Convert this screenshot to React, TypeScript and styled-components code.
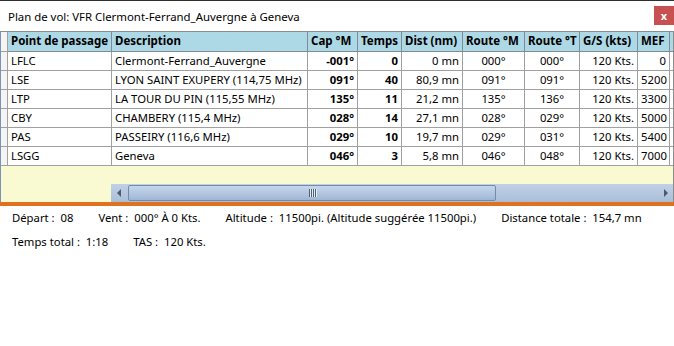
import styled, { createGlobalStyle } from "styled-components";

const GlobalStyle = createGlobalStyle`
  body {
    margin: 0;
    background: #ffffff;
    font-family: "Noto Sans", "Open Sans", sans-serif;
    font-size: 11.3px;
    color: #000000;
  }
`;

const COLS = "7px 104px 196px 50px 44px 61px 62px 55px 58px 32px 1fr";

type Align = "left" | "right" | "center";

const columns: { title: string; align: Align; bold?: boolean }[] = [
  { title: "Point de passage", align: "left" },
  { title: "Description", align: "left" },
  { title: "Cap °M", align: "right", bold: true },
  { title: "Temps", align: "right", bold: true },
  { title: "Dist (nm)", align: "right" },
  { title: "Route °M", align: "center" },
  { title: "Route °T", align: "center" },
  { title: "G/S (kts)", align: "right" },
  { title: "MEF", align: "right" },
];

const rows = [
  ["LFLC", "Clermont-Ferrand_Auvergne", "-001°", "0", "0 mn", "000°", "000°", "120 Kts.", "0"],
  ["LSE", "LYON SAINT EXUPERY (114,75 MHz)", "091°", "40", "80,9 mn", "091°", "091°", "120 Kts.", "5200"],
  ["LTP", "LA TOUR DU PIN (115,55 MHz)", "135°", "11", "21,2 mn", "135°", "136°", "120 Kts.", "3300"],
  ["CBY", "CHAMBERY (115,4 MHz)", "028°", "14", "27,1 mn", "028°", "029°", "120 Kts.", "5000"],
  ["PAS", "PASSEIRY (116,6 MHz)", "029°", "10", "19,7 mn", "029°", "031°", "120 Kts.", "5400"],
  ["LSGG", "Geneva", "046°", "3", "5,8 mn", "046°", "048°", "120 Kts.", "7000"],
];

const Window = styled.div`
  width: 674px;
  height: 346px;
  border-top: 1px solid #2e2e2e;
  box-sizing: border-box;
  display: flex;
  flex-direction: column;
`;

const TitleBar = styled.div`
  height: 30px;
  display: flex;
  align-items: center;
  justify-content: space-between;
  padding-left: 8px;
`;

const Title = styled.span`
  font-size: 11.4px;
`;

const CloseButton = styled.div`
  width: 20px;
  height: 19px;
  margin-top: -1px;
  background: #c75050;
  color: #ffffff;
  font-size: 11px;
  font-weight: bold;
  display: flex;
  align-items: center;
  justify-content: center;
  line-height: 1;
`;

const GridPanel = styled.div`
  height: 171px;
  box-sizing: border-box;
  border-top: 1px solid #8c8c8c;
  border-left: 1px solid #7b93b3;
  border-right: 1px solid #8c8c8c;
  background: #fafad2;
  display: flex;
  flex-direction: column;
`;

const Row = styled.div<{ $head?: boolean }>`
  display: grid;
  grid-template-columns: ${COLS};
  height: ${(p) => (p.$head ? 20 : 19)}px;
  background: ${(p) => (p.$head ? "#add8e6" : "#ffffff")};
`;

const Cell = styled.div<{ $align?: Align; $bold?: boolean; $head?: boolean }>`
  box-sizing: border-box;
  border-right: 1px solid ${(p) => (p.$head ? "#7f8c93" : "#a0a0a0")};
  border-bottom: 1px solid ${(p) => (p.$head ? "#7f8c93" : "#a0a0a0")};
  padding: 0 3px;
  text-align: ${(p) => p.$align ?? "left"};
  font-weight: ${(p) => (p.$bold ? "bold" : "normal")};
  font-size: ${(p) => (p.$head ? 11.5 : 11.3)}px;
  line-height: 18px;
  white-space: nowrap;
  overflow: hidden;
`;

const RowHeader = styled.div`
  box-sizing: border-box;
  background: #f4f4f4;
  border-right: 1px solid #a0a0a0;
  border-bottom: 1px solid #a0a0a0;
`;

const Filler = styled.div<{ $head?: boolean }>`
  box-sizing: border-box;
  background: ${(p) => (p.$head ? "#add8e6" : "#ffffff")};
  border-bottom: 1px solid ${(p) => (p.$head ? "#7f8c93" : "#a0a0a0")};
`;

const Spacer = styled.div`
  flex: 1;
`;

const ScrollRow = styled.div`
  height: 18px;
  display: flex;
`;

const ScrollGap = styled.div`
  width: 110px;
`;

const Track = styled.div`
  flex: 1;
  display: flex;
  align-items: center;
  background: linear-gradient(#c0d1e6, #a9bfd9);
  padding: 0 3px 0 4px;
  gap: 5px;
`;

const Arrow = styled.div<{ $dir: "left" | "right" }>`
  width: 0;
  height: 0;
  border-top: 4px solid transparent;
  border-bottom: 4px solid transparent;
  ${(p) =>
    p.$dir === "left"
      ? "border-right: 4px solid #4f5a66;"
      : "border-left: 4px solid #4f5a66;"}
  margin: 0 2px;
`;

const Thumb = styled.div`
  width: 368px;
  height: 16px;
  box-sizing: border-box;
  border: 1px solid #6f8cae;
  border-radius: 2px;
  background: linear-gradient(#c6d7ec, #9fb6d3);
  display: flex;
  align-items: center;
  justify-content: center;
  gap: 1px;
`;

const Grip = styled.span`
  width: 1px;
  height: 8px;
  background: #51606f;
  box-shadow: 1px 0 0 #e4ecf5;
`;

const OrangeBar = styled.div`
  height: 4px;
  background: #e0711f;
`;

const StatusBar = styled.div`
  padding: 0 12px;
  display: flex;
  flex-direction: column;
`;

const StatusLine = styled.div`
  display: flex;
  gap: 25px;
  line-height: 24px;
  white-space: pre;
`;

export default function App() {
  return (
    <>
      <GlobalStyle />
      <Window>
        <TitleBar>
          <Title>Plan de vol: VFR Clermont-Ferrand_Auvergne à Geneva</Title>
          <CloseButton>x</CloseButton>
        </TitleBar>
        <GridPanel>
          <Row $head>
            <RowHeader />
            {columns.map((c) => (
              <Cell key={c.title} $head $bold>
                {c.title}
              </Cell>
            ))}
            <Filler $head />
          </Row>
          {rows.map((r) => (
            <Row key={r[0]}>
              <RowHeader />
              {r.map((v, i) => (
                <Cell key={i} $align={columns[i].align} $bold={columns[i].bold}>
                  {v}
                </Cell>
              ))}
              <Filler />
            </Row>
          ))}
          <Spacer />
          <ScrollRow>
            <ScrollGap />
            <Track>
              <Arrow $dir="left" />
              <Thumb>
                <Grip />
                <Grip />
                <Grip />
                <Grip />
              </Thumb>
              <Spacer />
              <Arrow $dir="right" />
            </Track>
          </ScrollRow>
        </GridPanel>
        <OrangeBar />
        <StatusBar>
          <StatusLine>
            <span>Départ :  08</span>
            <span>Vent :  000° À 0 Kts.</span>
            <span>Altitude :  11500pi. (Altitude suggérée 11500pi.)</span>
            <span>Distance totale :  154,7 mn</span>
          </StatusLine>
          <StatusLine>
            <span>Temps total :  1:18</span>
            <span>TAS :  120 Kts.</span>
          </StatusLine>
        </StatusBar>
      </Window>
    </>
  );
}
